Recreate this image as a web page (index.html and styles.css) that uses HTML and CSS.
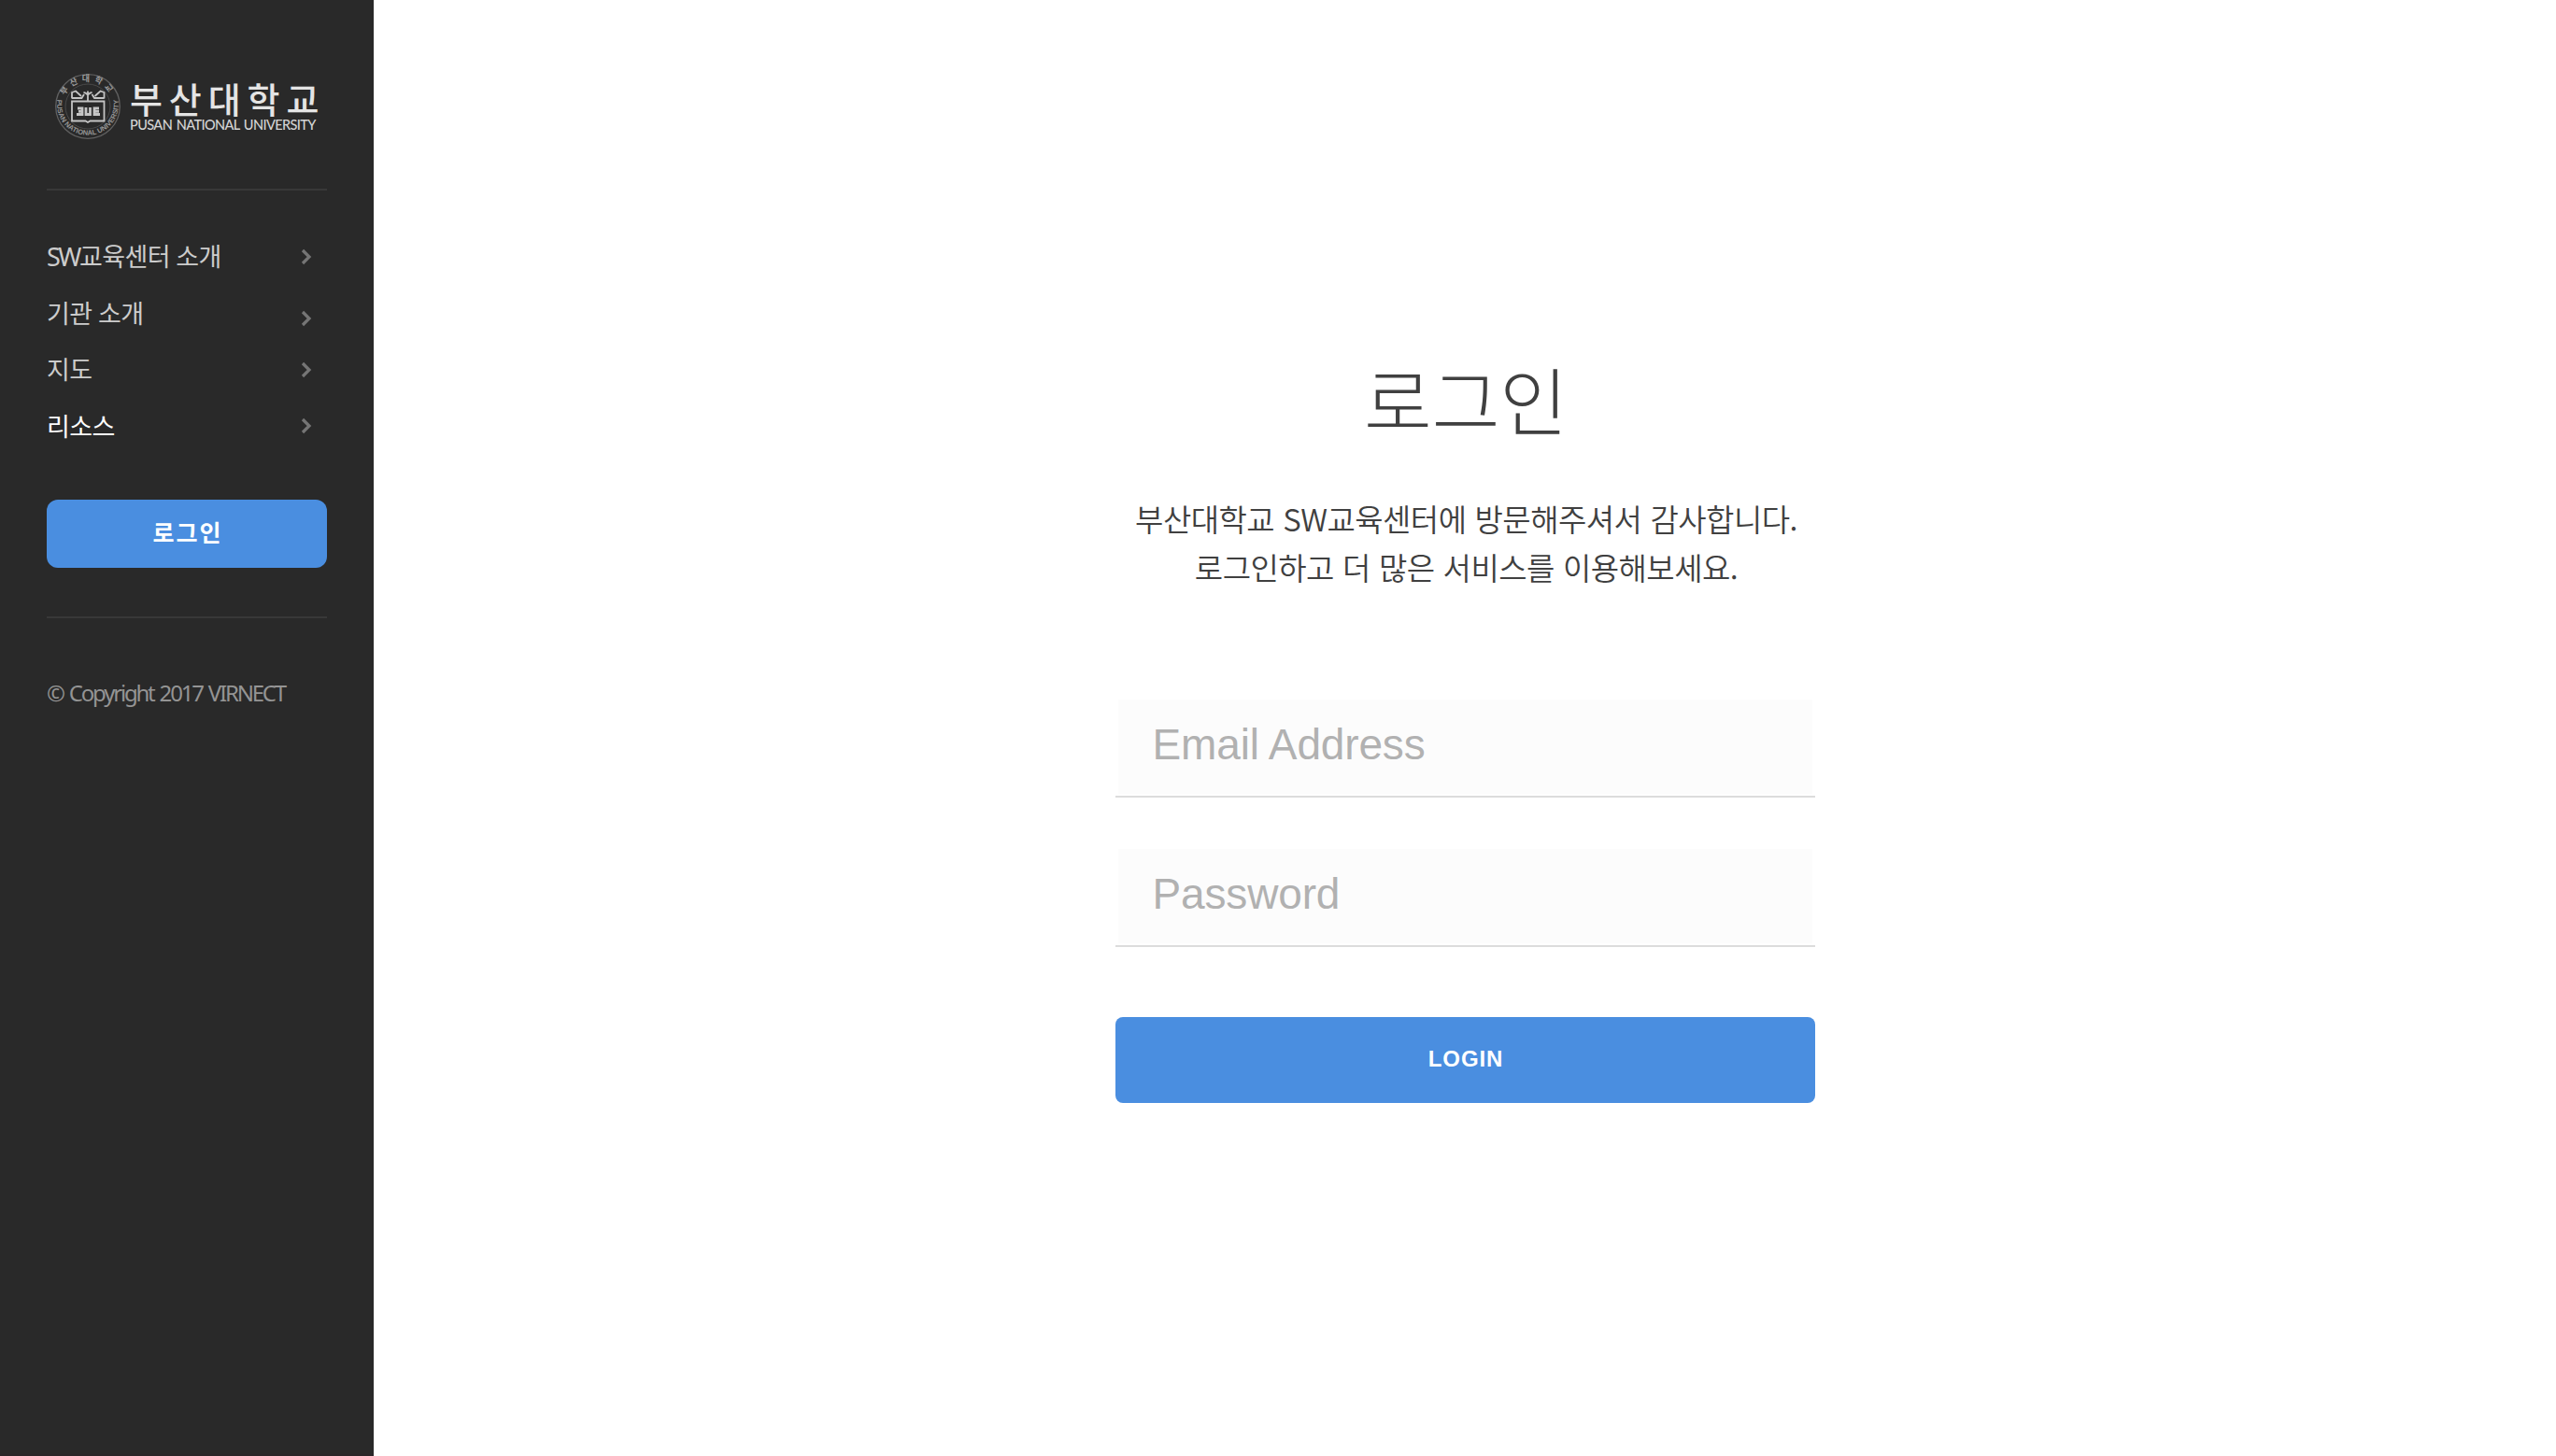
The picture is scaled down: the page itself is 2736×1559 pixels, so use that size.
FILE: index.html
```html
<!DOCTYPE html>
<html lang="ko">
<head>
<meta charset="utf-8">
<title>로그인</title>
<link rel="stylesheet" href="styles.css">
</head>
<body>
<aside class="sidebar">
  <a class="logo">
    <svg class="emblem" viewBox="0 0 72 72" fill="none">
      <defs>
        <path id="arc-top" d="M9 36a27 27 0 0 1 54 0"/>
        <path id="arc-bottom" d="M3.500 28a33 33 0 1 0 65 0"/>
      </defs>
      <circle cx="36" cy="36" r="34.3" stroke="#606060" stroke-width="1.300"/>
      <circle cx="36" cy="36" r="24" stroke="#4a4a4a"/>
      <text class="seal-ko"><textPath href="#arc-top" startOffset="50%" text-anchor="middle">부산대학교</textPath></text>
      <text class="seal-en"><textPath href="#arc-bottom" startOffset="50%" text-anchor="middle">PUSAN NATIONAL UNIVERSITY</textPath></text>
      <g stroke="#c4c4c4" stroke-width="1.8">
        <path d="M19 30.500h34.500v21H38.500l-2.500 1.500-2.500-1.500H19z"/>
        <path d="M19 27.500v-6.500l4-1.500 6 5.500M53.500 27.500v-6.500l-4-1.500-6 5.500M19 27h10.500l2.500-4M53.500 27h-10.500l-2.500-4M31.500 21c2 0 3 1 4.500 2.500 1.500-1.500 2.500-2.500 4.500-2.500M36 19.500v11"/>
        <path stroke-width="2.800" d="M25 38h5v6.500h-6M26 41.300h4M34 37v7.500h4.500v-7.500M48 38h-5v6.500h6M43 41.300h5"/>
      </g>
    </svg>
    <span class="wordmark"><span class="name-ko">부산대학교</span><span class="name-en">PUSAN NATIONAL UNIVERSITY</span></span>
  </a>
  <nav class="menu">
    <a class="item"><span><span class="latin">SW</span>교육센터 소개</span><svg class="chevron" viewBox="0 0 14 18"><path d="M3 2l7 7-7 7"/></svg></a>
    <a class="item lowered"><span>기관 소개</span><svg class="chevron" viewBox="0 0 14 18"><path d="M3 2l7 7-7 7"/></svg></a>
    <a class="item"><span>지도</span><svg class="chevron" viewBox="0 0 14 18"><path d="M3 2l7 7-7 7"/></svg></a>
    <a class="item active"><span>리소스</span><svg class="chevron" viewBox="0 0 14 18"><path d="M3 2l7 7-7 7"/></svg></a>
  </nav>
  <button class="side-login">로그인</button>
  <footer class="copyright">© Copyright 2017 VIRNECT</footer>
</aside>
<main class="content">
  <form class="login">
    <h1>로그인</h1>
    <p>부산대학교 SW교육센터에 방문해주셔서 감사합니다.<br>로그인하고 더 많은 서비스를 이용해보세요.</p>
    <input type="text" placeholder="Email Address">
    <input type="password" placeholder="Password">
    <button class="submit" type="button">LOGIN</button>
  </form>
</main>
</body>
</html>
```
FILE: styles.css
```css
* { box-sizing: border-box; }
body {
  margin: 0;
  height: 1559px;
  display: flex;
  background: #fff;
  font-family: "Noto Sans", "Noto Sans CJK KR", sans-serif;
  overflow: hidden;
}
button { border: 0; padding: 0; display: block; color: #fff; background: #4a8ee0; }
.sidebar {
  width: 400px;
  height: 100%;
  padding: 0 50px;
  background: #292929;
  border-bottom: 2px solid #2a2628;
}
.logo {
  display: flex;
  height: 204px;
  padding: 78px 0 0 8px;
  border-bottom: 2px solid #383838;
}
.emblem { width: 72px; height: 72px; flex: none; }
.seal-ko { font: 700 9px "Noto Sans CJK KR", sans-serif; letter-spacing: 4px; fill: #9a9a9a; }
.seal-en { font: 700 7.5px "Liberation Sans", sans-serif; fill: #969696; }
.wordmark { display: flex; flex-direction: column; padding: 8px 0 0 9px; white-space: nowrap; }
.name-ko {
  font: 500 38px/38px "Noto Sans CJK KR", sans-serif;
  letter-spacing: 6.900px;
  color: #e4e4e4;
}
.name-en {
  font: 500 14.5px/20px Lato, sans-serif;
  letter-spacing: -0.6px;
  word-spacing: 1.500px;
  color: #d4d4d4;
}
.menu { padding-top: 41px; }
.item {
  display: flex;
  justify-content: space-between;
  align-items: center;
  height: 60.5px;
  padding-right: 15px;
  font: 400 27px/60px "Noto Sans", "Noto Sans CJK KR", sans-serif;
  letter-spacing: -0.6px;
  color: #ccc;
}
.latin { letter-spacing: -2.500px; }
.item.active { color: #fff; }
.chevron { width: 14px; height: 18px; margin-top: -1px; fill: none; stroke: #757575; stroke-width: 3.2; }
.lowered .chevron { margin-top: 11px; }
.side-login {
  width: 300px;
  height: 73px;
  margin-top: 48px;
  padding: 0 0 5px 2px;
  border-radius: 12px;
  font: 700 25px/66px "Noto Sans CJK KR", sans-serif;
  letter-spacing: 2px;
}
.copyright {
  margin-top: 52px;
  padding-top: 60px;
  border-top: 2px solid #383838;
  font: 400 24px/40px "Noto Sans", sans-serif;
  letter-spacing: -2.2px;
  word-spacing: 2px;
  color: #949494;
  white-space: nowrap;
}
.content { flex: 1; display: flex; justify-content: center; padding-top: 367px; }
.login { width: 749px; display: flex; flex-direction: column; }
h1 {
  margin: 0;
  padding-left: 2px;
  height: 120px;
  font: 300 79px/120px "Noto Sans CJK KR", sans-serif;
  text-align: center;
  color: #404040;
}
p {
  margin: 43px 0 0;
  padding-left: 3px;
  height: 104px;
  font: 350 33px/51.500px "Noto Sans CJK KR", sans-serif;
  letter-spacing: -0.55px;
  word-spacing: 0.4px;
  text-align: center;
  white-space: nowrap;
  color: #404040;
}
input {
  height: 106px;
  margin: 114px 0 0;
  padding: 0 40px 8px;
  border: 0;
  background:
    linear-gradient(#dcdcdc, #dcdcdc) 0 100% / 100% 2px no-repeat,
    linear-gradient(#fcfcfc, #fcfcfc) 3px 1px / 743px 101px no-repeat;
  font: 46px "Liberation Sans", Arial, sans-serif;
  letter-spacing: -0.150px;
  outline: 0;
}
input + input { margin-top: 54px; }
input::placeholder { color: #b1b1b1; opacity: 1; }
.submit {
  height: 92px;
  margin-top: 75px;
  padding: 0 0 2px 2px;
  border-radius: 8px;
  font: 700 24px/90px "Liberation Sans", Arial, sans-serif;
  letter-spacing: 0.9px;
}
```
